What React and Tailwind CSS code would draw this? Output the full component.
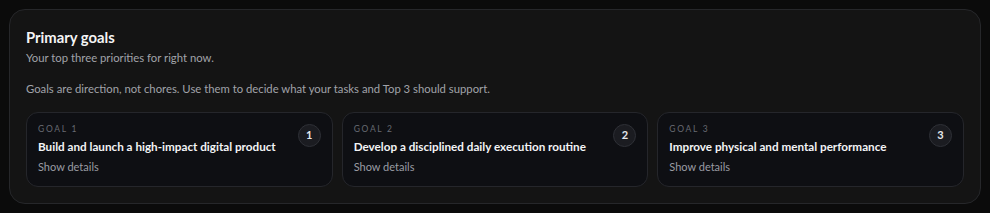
const goals = [
  { n: 1, title: "Build and launch a high-impact digital product" },
  { n: 2, title: "Develop a disciplined daily execution routine" },
  { n: 3, title: "Improve physical and mental performance" },
];

function GoalCard({ goal }) {
  return (
    <div className="relative rounded-[12px] border border-[#25262b] bg-[#0e0f13] px-[11px] pt-[10px] pb-[12px]">
      <div className="text-[8.5px] leading-[12px] tracking-[0.2em] text-[#676a72]">GOAL {goal.n}</div>
      <div className="mt-[3px] text-[11.7px] leading-[16px] font-bold text-[#f3f4f6]">{goal.title}</div>
      <div className="mt-[6px] text-[11px] leading-[14px] text-[#9a9ca3]">Show details</div>
      <div className="absolute right-[11px] top-[11px] flex h-[23px] w-[23px] items-center justify-center rounded-full border border-[#2e3036] bg-[#1b1c21] text-[11px] font-bold text-[#e5e7eb]">
        {goal.n}
      </div>
    </div>
  );
}

export default function App() {
  return (
    <div className="min-h-screen bg-[#0b0b0b] p-[9px]" style={{ fontFamily: "Lato, 'Noto Sans', sans-serif" }}>
      <div className="rounded-[16px] border border-[#26272a] bg-[#141414] px-[16px] pt-[18px] pb-[16px]">
        <h2 className="text-[14.8px] leading-[19px] font-bold text-[#f5f5f5]">Primary goals</h2>
        <p className="mt-[3px] text-[11.3px] leading-[16px] text-[#a1a3a9]">Your top three priorities for right now.</p>
        <p className="mt-[15px] text-[11.3px] leading-[16px] text-[#a1a3a9]">
          Goals are direction, not chores. Use them to decide what your tasks and Top 3 should support.
        </p>
        <div className="mt-[15px] grid grid-cols-3 gap-[9px]">
          {goals.map((g) => (
            <GoalCard key={g.n} goal={g} />
          ))}
        </div>
      </div>
    </div>
  );
}
